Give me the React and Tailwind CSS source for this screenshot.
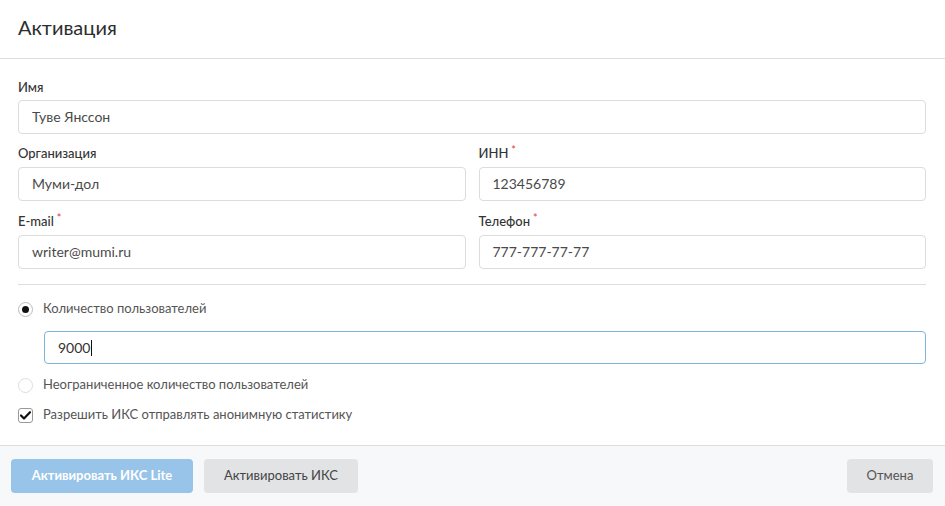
import React from "react";

function Label({ children, required }) {
  return (
    <div className="h-5 flex items-center text-[13px] text-[#333] font-medium">
      {children}
      {required && <span className="text-[#e5484d] text-[11px] ml-[3px] -mt-2">*</span>}
    </div>
  );
}

function Input({ value }) {
  return (
    <div className="mt-[3px] h-[34px] border border-[#dcdcdc] rounded-[4px] flex items-center px-[13px] pb-px text-[14px] text-[#4a4a4a] bg-white">
      {value}
    </div>
  );
}

export default function App() {
  return (
    <div className="w-[945px] h-[506px] bg-white flex flex-col" style={{ fontFamily: "Lato, 'Noto Sans', sans-serif" }}>
      <div className="h-[59px] border-b border-[#dedede] flex items-center px-[18px] shrink-0">
        <div className="text-[20px] text-[#2d2d2d] -mt-[5px]">Активация</div>
      </div>
      <div className="flex-1 px-[18px] pt-[19px] pr-[19px]">
        <Label>Имя</Label>
        <div className="-mt-px">
          <Input value="Туве Янссон" />
        </div>
        <div className="grid grid-cols-2 gap-x-[13px] mt-[10px]">
          <div>
            <Label>Организация</Label>
            <Input value="Муми-дол" />
          </div>
          <div>
            <Label required>ИНН</Label>
            <Input value="123456789" />
          </div>
          <div className="mt-[11px]">
            <Label required>E-mail</Label>
            <Input value="writer@mumi.ru" />
          </div>
          <div className="mt-[11px]">
            <Label required>Телефон</Label>
            <Input value="777-777-77-77" />
          </div>
        </div>
        <div className="mt-[15px] border-t border-[#dedede]" />
        <div className="mt-[14px] h-5 flex items-center gap-[10px] text-[13px] text-[#555]">
          <div className="w-[15px] h-[15px] rounded-full border border-[#bbb] flex items-center justify-center">
            <div className="w-[7px] h-[7px] rounded-full bg-[#111]" />
          </div>
          Количество пользователей
        </div>
        <div className="ml-[26px] mt-[12px] h-[33px] border border-[#7cb5e0] rounded-[4px] flex items-center px-[13px] text-[14px] text-[#333]">
          9000<span className="w-px h-[16px] bg-[#111] ml-px" />
        </div>
        <div className="mt-[11px] h-5 flex items-center gap-[10px] text-[13px] text-[#555]">
          <div className="w-[15px] h-[15px] rounded-full border border-[#ddd]" />
          Неограниченное количество пользователей
        </div>
        <div className="mt-[10px] h-5 flex items-center gap-[10px] text-[13px] text-[#555]">
          <div className="w-[15px] h-[15px] rounded-[3px] border border-[#999] flex items-center justify-center">
            <svg width="11" height="9" viewBox="0 0 11 9">
              <path d="M1 4.5 L4 7.5 L10 1.2" fill="none" stroke="#111" strokeWidth="2.2" strokeLinecap="round" strokeLinejoin="round" />
            </svg>
          </div>
          Разрешить ИКС отправлять анонимную статистику
        </div>
      </div>
      <div className="h-[61px] shrink-0 border-t border-[#dedede] bg-[#f7f8fa] flex items-center px-[11px] pr-[12px]">
        <div className="h-[34px] w-[182px] rounded-[4px] bg-[#97c4e8] text-white text-[13px] font-bold flex items-center justify-center">
          Активировать ИКС Lite
        </div>
        <div className="ml-[11px] h-[34px] w-[154px] rounded-[4px] bg-[#e2e3e5] text-[#444] text-[13px] flex items-center justify-center">
          Активировать ИКС
        </div>
        <div className="ml-auto h-[34px] w-[86px] rounded-[4px] bg-[#e2e3e5] text-[#555] text-[13px] flex items-center justify-center">
          Отмена
        </div>
      </div>
    </div>
  );
}
